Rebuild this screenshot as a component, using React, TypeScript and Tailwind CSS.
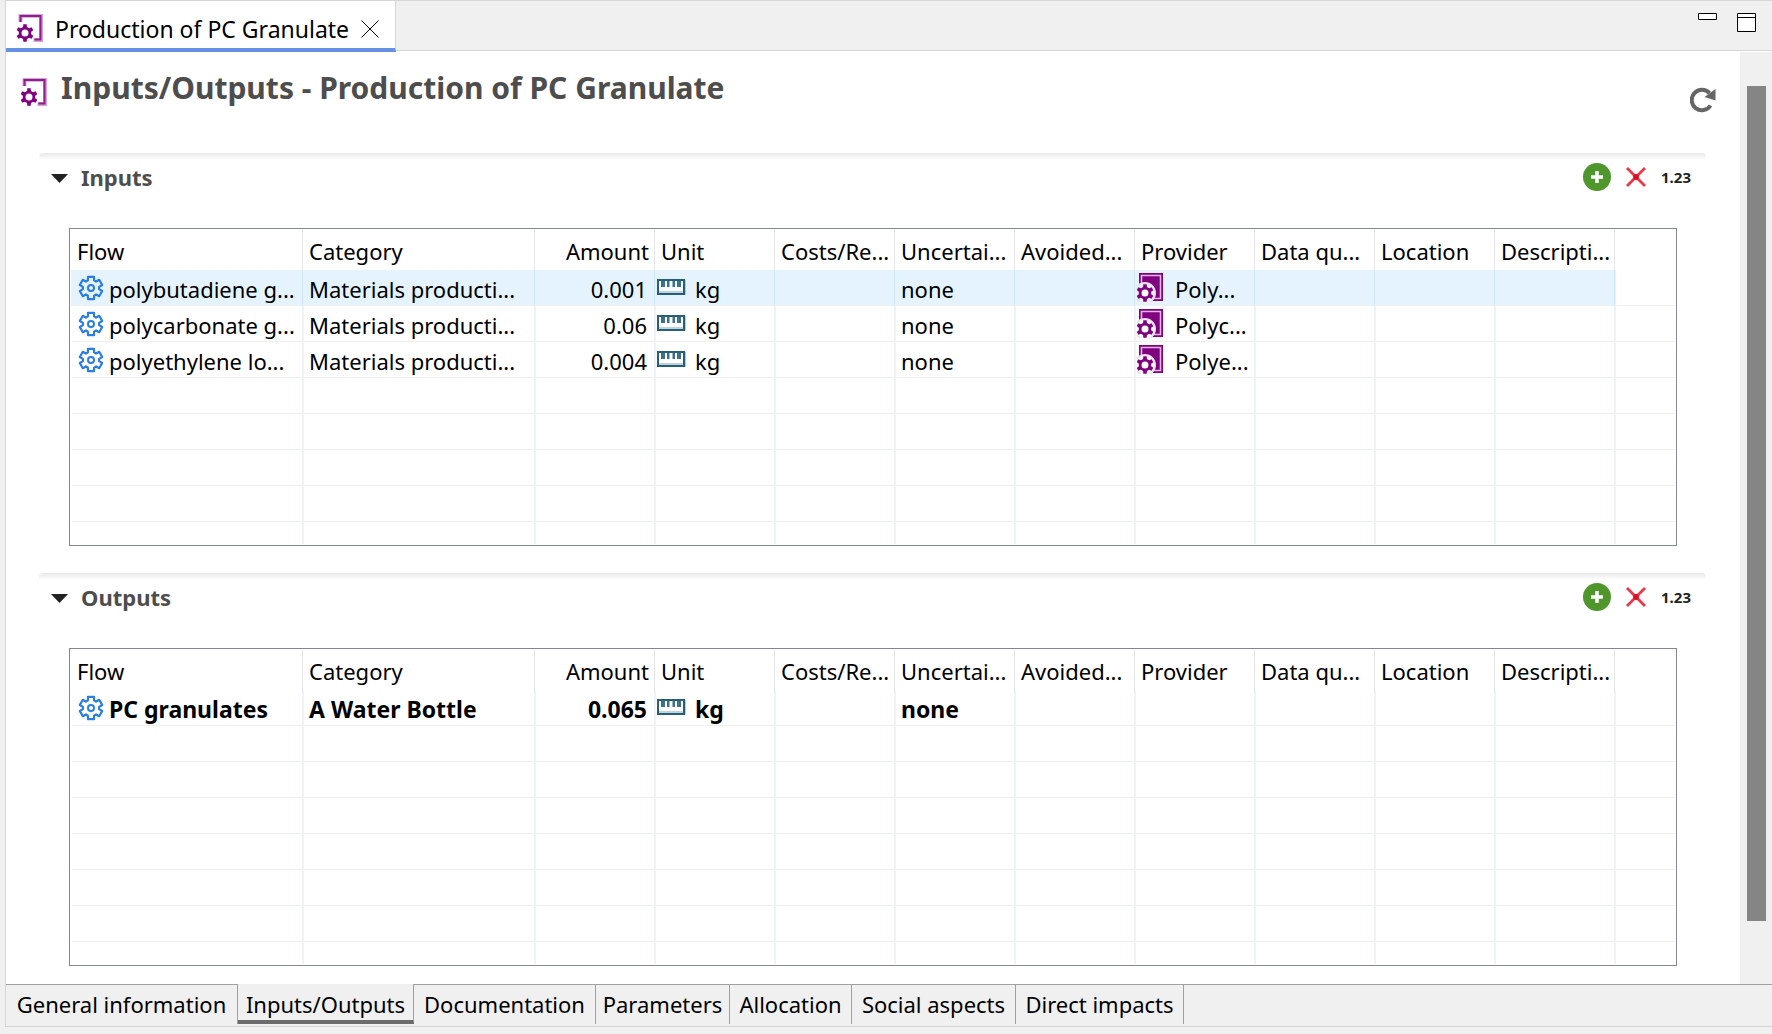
import React from "react";

function gearPath(cx: number, cy: number, outer: number, inner: number, tip: number, root: number) {
  const points: string[] = [];
  for (let i = 0; i < 6; i++) {
    const mid = -90 + i * 60;
    const corners = [
      [inner, mid - root],
      [outer, mid - tip],
      [outer, mid + tip],
      [inner, mid + root],
    ];
    for (const [r, deg] of corners) {
      const a = (deg * Math.PI) / 180;
      points.push(`${(cx + r * Math.cos(a)).toFixed(2)} ${(cy + r * Math.sin(a)).toFixed(2)}`);
    }
  }
  return `M${points.join("L")}Z`;
}

const smallGear = gearPath(8, 19, 8.8, 6.3, 11, 18);
const flowGear = gearPath(13, 13, 11.6, 8.2, 15, 22);

function SmallGear() {
  return (
    <>
      <path d={smallGear} fill="#800080" />
      <circle cx="8" cy="19" r="3.5" fill="#fff" />
    </>
  );
}

function ProcessIcon() {
  return (
    <svg width="26" height="28" viewBox="0 0 26 28" className="shrink-0" aria-hidden="true">
      <path d="M3.5 8V1.8H24V26H16.5" fill="none" stroke="#d3a3d3" strokeWidth="4" />
      <path d="M3.5 8V2H23.5V25.5H17.5" fill="none" stroke="#8f1f8f" strokeWidth="2" />
      <SmallGear />
    </svg>
  );
}

function ProviderIcon() {
  return (
    <svg width="26" height="29" viewBox="0 0 26 29" className="shrink-0" aria-hidden="true">
      <mask id="provider-cut">
        <rect width="26" height="29" fill="#fff" />
        <circle cx="8" cy="20" r="9.5" fill="#000" />
      </mask>
      <g mask="url(#provider-cut)">
        <rect x="2" y="0" width="24" height="28" fill="#800080" />
        <path d="M4.5 14V2.5H23.5V25.5H14" fill="none" stroke="#dfb8df" strokeWidth="1.6" />
        <circle cx="8" cy="20" r="10" fill="none" stroke="#f0dcf0" strokeWidth="2" />
      </g>
      <g transform="translate(0 1)">
        <SmallGear />
      </g>
    </svg>
  );
}

function FlowIcon() {
  return (
    <svg width="26" height="26" viewBox="0 0 26 26" className="shrink-0" aria-hidden="true">
      <path d={flowGear} fill="none" stroke="#2a7de1" strokeWidth="2.2" strokeLinejoin="round" />
      <circle cx="13" cy="13" r="3" fill="none" stroke="#2a7de1" strokeWidth="2" />
    </svg>
  );
}

function UnitIcon() {
  return (
    <svg width="29" height="17" viewBox="0 0 29 17" className="shrink-0" aria-hidden="true">
      <rect x="1" y="1" width="26" height="14" fill="#fff" fillOpacity="0.6" stroke="#265f78" strokeWidth="2" />
      <path d="M2 13H26" stroke="#c3d2da" strokeWidth="2" />
      <path d="M4 2h4v6h-4zM10 2h2.5v6h-2.5zM15.500 2h2.500v6h-2.500zM20 2h4v6h-4z" fill="#3d7089" />
      <path d="M28.500 1V16" stroke="#bdccd4" />
    </svg>
  );
}

type Row = {
  flow: string;
  category: string;
  amount: string;
  unit: string;
  uncertainty: string;
  provider?: string;
};

const columns = [
  "Flow",
  "Category",
  "Amount",
  "Unit",
  "Costs/Re...",
  "Uncertai...",
  "Avoided...",
  "Provider",
  "Data qu...",
  "Location",
  "Descripti...",
];

const inputs: Row[] = [
  { flow: "polybutadiene g...", category: "Materials producti...", amount: "0.001", unit: "kg", uncertainty: "none", provider: "Poly..." },
  { flow: "polycarbonate g...", category: "Materials producti...", amount: "0.06", unit: "kg", uncertainty: "none", provider: "Polyc..." },
  { flow: "polyethylene lo...", category: "Materials producti...", amount: "0.004", unit: "kg", uncertainty: "none", provider: "Polye..." },
];

const outputs: Row[] = [
  { flow: "PC granulates", category: "A Water Bottle", amount: "0.065", unit: "kg", uncertainty: "none" },
];

const BODY_ROWS = 8;

function cellContent(row: Row | undefined, column: number) {
  if (!row) return null;
  switch (column) {
    case 0:
      return (
        <div className="flex items-center gap-[5px] pl-[6px]">
          <FlowIcon />
          <span className="pt-[2px]">{row.flow}</span>
        </div>
      );
    case 1:
      return <div className="pt-[2px] pl-[5px]">{row.category}</div>;
    case 2:
      return <div className="pt-[2px] pr-[7px] text-right">{row.amount}</div>;
    case 3:
      return (
        <div className="flex items-center gap-[9px] pl-[1px]">
          <UnitIcon />
          <span className="pt-[2px]">{row.unit}</span>
        </div>
      );
    case 5:
      return <div className="pt-[2px] pl-[5px]">{row.uncertainty}</div>;
    case 7:
      return row.provider ? (
        <div className="flex items-center gap-3 pl-[1px]">
          <ProviderIcon />
          <span className="pt-[2px]">{row.provider}</span>
        </div>
      ) : null;
    default:
      return null;
  }
}

function ExchangeTable({ label, rows, selected, bold }: { label: string; rows: Row[]; selected?: number; bold?: boolean }) {
  return (
    <div className="border border-[#828790] p-px">
      <table aria-label={label} className="w-full table-fixed border-separate border-spacing-0 whitespace-nowrap text-black">
        <colgroup>
          {columns.map((c, i) => (
            <col key={c} className={i < 2 ? "w-[232px]" : "w-[120px]"} />
          ))}
          <col />
        </colgroup>
        <thead>
          <tr className="h-10">
            {columns.map((c, i) => (
              <th
                key={c}
                scope="col"
                className={`border-r border-[#e5e5e5] p-0 pt-[2px] font-normal ${i === 2 ? "pr-[5px] text-right" : "pl-[6px] text-left"}`}
              >
                {c}
              </th>
            ))}
            <td />
          </tr>
        </thead>
        <tbody className={bold ? "text-[23px] font-bold" : ""}>
          {Array.from({ length: BODY_ROWS }, (_, r) => {
            const active = r === selected;
            const last = r === BODY_ROWS - 1;
            return (
              <tr key={r} className={last ? "h-[22px]" : "h-9"}>
                {columns.map((c, i) => (
                  <td
                    key={c}
                    className={`p-0 leading-8 ${last ? "" : "border-b border-b-[#f0f0f0]"} ${
                      active
                        ? "border-x border-l-[#e5f3ff] border-r-[#cce8ff] bg-[#e5f3ff]"
                        : i === 0
                          ? "border-r border-l border-l-transparent border-r-[#edf2fb]"
                          : "border-x border-x-[#edf2fb]"
                    }`}
                  >
                    {cellContent(rows[r], i)}
                  </td>
                ))}
                <td
                  className={`border-l p-0 ${active ? "border-l-[#e5f3ff]" : "border-l-[#edf2fb]"} ${last ? "" : "border-b border-b-[#f0f0f0]"}`}
                />
              </tr>
            );
          })}
        </tbody>
      </table>
    </div>
  );
}

function Section({ title, children }: { title: string; children: React.ReactNode }) {
  return (
    <section className="mr-[34px] ml-[33px]">
      <div className="h-[7px] rounded-t bg-linear-to-b from-[#e9e9e9] to-white" />
      <div className="flex h-[68px] items-start justify-between pr-[15px] pl-3">
        <button type="button" aria-expanded="true" className="flex items-center gap-[13px] font-bold leading-[34px] text-[#4d4d4d]">
          <svg width="17" height="11" viewBox="0 0 17 11" aria-hidden="true">
            <path d="M0 2H17L8.500 11Z" fill="#222" />
          </svg>
          <h2>{title}</h2>
        </button>
        <div className="flex h-[34px] items-center gap-[15px]">
          <button type="button" aria-label={`Add to ${title}`}>
            <svg width="28" height="28" viewBox="0 0 28 28">
              <circle cx="14" cy="14" r="14" fill="#4f962c" />
              <path d="M14 8V20M8 14H20" stroke="#fff" strokeWidth="3.500" />
            </svg>
          </button>
          <button type="button" aria-label={`Remove from ${title}`}>
            <svg width="20" height="20" viewBox="0 0 20 20">
              <path d="M1 1L19 19M19 1L1 19" stroke="#e8384a" strokeWidth="2.800" />
              <path d="M8 8L12 12M12 8L8 12" stroke="#d90f24" strokeWidth="3.500" />
            </svg>
          </button>
          <button type="button" className="text-[15px] font-bold text-[#222]">
            1.23
          </button>
        </div>
      </div>
      <div className="mr-[29px] ml-[30px]">{children}</div>
    </section>
  );
}

const pages = [
  { name: "General information", width: "w-[232px]" },
  { name: "Inputs/Outputs", width: "w-[176px]" },
  { name: "Documentation", width: "w-[182px]" },
  { name: "Parameters", width: "w-[134px]" },
  { name: "Allocation", width: "w-[122px]" },
  { name: "Social aspects", width: "w-[164px]" },
  { name: "Direct impacts", width: "w-[168px]" },
];

export default function App() {
  return (
    <div className="flex min-h-screen flex-col bg-[#f0f0f0] pb-[7px] pl-[5px] font-['Noto_Sans','Segoe_UI',sans-serif] text-[22px] leading-8 text-black">
      <div className="flex grow flex-col border-t border-b border-l border-[#d6d6d6]">
        <header className="flex h-[51px] items-stretch justify-between bg-white">
          <div className="flex items-center border-r border-b-4 border-r-[#d6d6d6] border-b-[#6791e5] bg-white pr-4 pl-[11px]">
            <div className="pt-[6px]">
              <ProcessIcon />
            </div>
            <span className="ml-3 pt-2 text-[23px] whitespace-nowrap">Production of PC Granulate</span>
            <button type="button" aria-label="Close" className="ml-3 pt-2">
              <svg width="18" height="18" viewBox="0 0 18 18">
                <path d="M0.500 0.500L17.500 17.500M17.500 0.500L0.500 17.500" stroke="#000" />
              </svg>
            </button>
          </div>
          <div className="mb-px flex grow items-start justify-end gap-5 border-b border-[#d6d6d6] bg-[#f0f0f0] pt-3 pr-4">
            <button type="button" aria-label="Minimize">
              <svg width="19" height="19" viewBox="0 0 19 19">
                <path d="M0.500 0.500H18.500V6.500H0.500Z" fill="#fff" stroke="#000" />
              </svg>
            </button>
            <button type="button" aria-label="Maximize">
              <svg width="19" height="19" viewBox="0 0 19 19">
                <path d="M0.500 0.500H18.500V18.500H0.500ZM0.500 4.500H18.500" fill="#fff" stroke="#000" />
              </svg>
            </button>
          </div>
        </header>

        <div className="flex grow">
          <main className="flex grow flex-col bg-white pb-[18px]">
            <div className="flex h-[101px] items-start justify-between pt-[14px] pr-6 pl-[15px]">
              <div className="flex items-center gap-[14px]">
                <div className="pt-2">
                  <ProcessIcon />
                </div>
                <h1 className="text-[30px] leading-[44px] font-bold text-[#4d4d4d]">
                  Inputs/Outputs - Production of PC Granulate
                </h1>
              </div>
              <button type="button" aria-label="Refresh" className="pt-[21px]">
                <svg width="26" height="26" viewBox="0 0 26 26">
                  <path d="M20.500 18.500A10.200 10.200 0 1 1 19.500 6.200" fill="none" stroke="#666" strokeWidth="4" />
                  <path d="M25.500 2V13.500L14.500 10Z" fill="#666" />
                </svg>
              </button>
            </div>
            <Section title="Inputs">
              <ExchangeTable label="Inputs" rows={inputs} selected={0} />
            </Section>
            <div className="h-[27px]" />
            <Section title="Outputs">
              <ExchangeTable label="Outputs" rows={outputs} bold />
            </Section>
          </main>
          <div className="flex w-8 shrink-0 flex-col pt-[34px] pr-[6px] pb-[63px] pl-[7px]">
            <div className="grow bg-[#858585]" />
          </div>
        </div>

        <nav className="flex h-[42px] items-stretch">
          {pages.map((p, i) => (
            <button
              key={p.name}
              type="button"
              className={`${p.width} mb-[2px] border-r border-[#a0a0a0] text-center leading-[36px] whitespace-nowrap ${
                i === 1 ? "border-b-4 border-b-[#6b6b6b] pt-[2px]" : "border-t pb-[2px]"
              }`}
            >
              {p.name}
            </button>
          ))}
          <div className="grow border-t border-[#a0a0a0]" />
        </nav>
      </div>
    </div>
  );
}
